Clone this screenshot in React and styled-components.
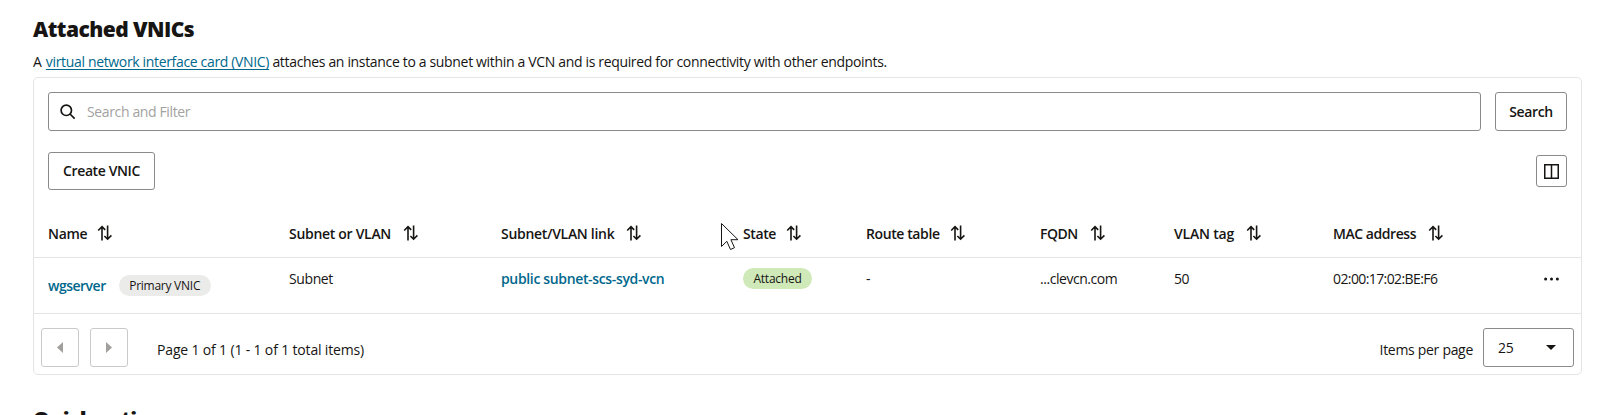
import React from "react";
import styled, { createGlobalStyle, css } from "styled-components";

const Global = createGlobalStyle`
  * { box-sizing: border-box; }
  body {
    margin: 0;
    background: #fff;
    color: #161513;
    font-family: "Open Sans", "Noto Sans", sans-serif;
    font-size: 14px;
    line-height: 20px;
  }
`;

const Page = styled.main`
  width: 1609px;
  height: 415px;
  overflow: hidden;
  padding: 15px 27px 0 33px;
`;

const Heading = styled.h2`
  margin: 0;
  font-size: 21px;
  line-height: 29px;
  font-weight: 800;
  white-space: nowrap;
  letter-spacing: -0.55px;
`;

const Intro = styled.p`
  margin: 8px 0 5px;
  white-space: nowrap;
  letter-spacing: -0.335px;
`;

const InlineLink = styled.a`
  margin-left: 1px;
  color: #00688c;
  text-decoration: underline;
  text-underline-offset: 2px;
  letter-spacing: -0.34px;
`;

const Card = styled.section`
  width: 1549px;
  height: 298px;
  border: 1px solid #e4e4e3;
  border-radius: 5px;
  display: flex;
  flex-direction: column;
`;

const SearchBar = styled.div`
  display: flex;
  gap: 14px;
  padding: 14px 14px 0;
`;

const outline = css`
  border: 1px solid #8b8a89;
  border-radius: 3px;
  background: #fff;
`;

const SearchField = styled.div`
  ${outline}
  flex: 1;
  height: 39px;
  display: flex;
  align-items: center;
  gap: 11px;
  padding-left: 11px;
  color: #a3a2a1;
  letter-spacing: -0.37px;
`;

const Button = styled.button`
  ${outline}
  width: ${(p) => p.$w}px;
  height: ${(p) => p.$h}px;
  padding: 0;
  display: flex;
  align-items: center;
  justify-content: center;
  font: 600 14px/20px "Open Sans", "Noto Sans", sans-serif;
  letter-spacing: -0.4px;
  color: #161513;
  white-space: nowrap;
  ${(p) => p.$disabled && css`border-color: #cbcac9; color: #a09f9e;`}
`;

const Toolbar = styled.div`
  display: flex;
  justify-content: space-between;
  align-items: center;
  padding: 21px 14px 0;
`;

const Row = styled.div`
  display: grid;
  grid-template-columns: 241px 212px 242px 123px 174px 134px 159px 1fr 15px;
  padding: 0 22px 0 14px;
  border-bottom: 1px solid #e4e4e3;
  white-space: nowrap;
`;

const HeaderRow = styled(Row)`
  height: 68px;
  padding-top: 34px;
`;

const BodyRow = styled(Row)`
  height: 56px;
  padding-top: 11px;
`;

const HeadCell = styled.div`
  display: flex;
  align-items: flex-start;
  gap: ${(p) => p.$gap}px;
  height: 20px;
  font-weight: 600;
  letter-spacing: ${(p) => p.$ls}px;
`;

const Cell = styled.div`
  letter-spacing: ${(p) => p.$ls || 0}px;
`;

const NameCell = styled(Cell)`
  display: flex;
  align-items: center;
  height: 21px;
  margin-top: 6px;
  gap: 13px;
`;

const BoldLink = styled.a`
  color: #00688c;
  font-weight: 600;
  letter-spacing: ${(p) => p.$ls}px;
`;

const Badge = styled.span`
  display: flex;
  align-items: center;
  justify-content: center;
  width: ${(p) => p.$w}px;
  height: 21px;
  margin-top: ${(p) => p.$mt || 0}px;
  border-radius: 11px;
  background: ${(p) => p.$bg};
  font-size: 12px;
  line-height: 20px;
  letter-spacing: -0.25px;
`;

const Footer = styled.div`
  display: flex;
  align-items: center;
  padding: 14px 7px 0;
  height: 53px;
`;

const PageButton = styled(Button)`
  margin-right: 11px;
`;

const FooterText = styled.span`
  padding-top: 4px;
  letter-spacing: ${(p) => p.$ls}px;
  white-space: nowrap;
`;

const PageStatus = styled(FooterText)`
  margin-left: 18px;
  margin-right: auto;
`;

const Select = styled.div`
  ${outline}
  margin-left: 10px;
  width: 91px;
  height: 39px;
  display: flex;
  justify-content: space-between;
  align-items: center;
  padding: 0 17px 0 14px;
  letter-spacing: -0.3px;
`;

const Next = styled.div`
  margin-top: 30px;
`;

const Pointer = styled.svg`
  position: absolute;
  left: 720px;
  top: 222px;
`;

const SortIcon = () => (
  <svg width="16" height="18" viewBox="0 0 16 18" fill="none" stroke="#161513" strokeWidth="1.6">
    <path d="M5 16.5V3M1.2 6.5L5 2.7l3.2 3.2M10.6 1.5V15M7.4 12l3.2 3.2 3.8-3.8" />
  </svg>
);

const columns = [
  ["Name", -0.3, 10],
  ["Subnet or VLAN", -0.3, 12],
  ["Subnet/VLAN link", -0.3, 12],
  ["State", -0.4, 10],
  ["Route table", -0.4, 10],
  ["FQDN", -0.5, 12],
  ["VLAN tag", -0.2, 12],
  ["MAC address", -0.45, 12],
];

export default function App() {
  return (
    <Page>
      <Global />
      <Heading>Attached VNICs</Heading>
      <Intro>
        A <InlineLink>virtual network interface card (VNIC)</InlineLink> attaches an instance to a
        subnet within a VCN and is required for connectivity with other endpoints.
      </Intro>
      <Card>
        <SearchBar>
          <SearchField>
            <svg width="16" height="16" viewBox="0 0 16 16" fill="none" stroke="#161513" strokeWidth="1.7">
              <circle cx="6.3" cy="6.3" r="5.2" />
              <path d="M10 10l4.6 4.6" />
            </svg>
            Search and Filter
          </SearchField>
          <Button $w={72} $h={39}>Search</Button>
        </SearchBar>
        <Toolbar>
          <Button $w={107} $h={38}>Create VNIC</Button>
          <Button $w={31} $h={32} aria-label="Columns">
            <svg width="15" height="15" viewBox="0 0 15 15" fill="none" stroke="#161513" strokeWidth="1.5">
              <path d="M.75 .75h13.5v13.5H.75zM7.5 1v13" />
            </svg>
          </Button>
        </Toolbar>
        <HeaderRow>
          {columns.map(([label, ls, gap]) => (
            <HeadCell key={label} $ls={ls} $gap={gap}>
              {label}
              <SortIcon />
            </HeadCell>
          ))}
        </HeaderRow>
        <BodyRow>
          <NameCell>
            <BoldLink $ls={-0.5}>wgserver</BoldLink>
            <Badge $w={92} $bg="#ebebea">Primary VNIC</Badge>
          </NameCell>
          <Cell $ls={-0.4}>Subnet</Cell>
          <Cell><BoldLink $ls={-0.35}>public subnet-scs-syd-vcn</BoldLink></Cell>
          <Cell><Badge $w={69} $bg="#cfe9b9" $mt={-1}>Attached</Badge></Cell>
          <Cell>-</Cell>
          <Cell $ls={-0.45}>...clevcn.com</Cell>
          <Cell $ls={-0.6}>50</Cell>
          <Cell $ls={-0.6}>02:00:17:02:BE:F6</Cell>
          <Cell>
            <svg width="15" height="20" viewBox="0 0 15 20" fill="#161513">
              <circle cx="1.6" cy="10" r="1.5" />
              <circle cx="7.5" cy="10" r="1.5" />
              <circle cx="13.4" cy="10" r="1.5" />
            </svg>
          </Cell>
        </BodyRow>
        <Footer>
          <PageButton $w={38} $h={39} $disabled aria-label="Previous">
            <svg width="6" height="11" viewBox="0 0 6 11" fill="currentColor"><path d="M6 0v11L0 5.5z" /></svg>
          </PageButton>
          <PageButton $w={38} $h={39} $disabled aria-label="Next">
            <svg width="6" height="11" viewBox="0 0 6 11" fill="currentColor"><path d="M0 0v11l6-5.5z" /></svg>
          </PageButton>
          <PageStatus $ls={-0.16}>Page 1 of 1 (1 - 1 of 1 total items)</PageStatus>
          <FooterText $ls={-0.3}>Items per page</FooterText>
          <Select>
            25
            <svg width="10" height="5" viewBox="0 0 10 5" fill="#161513"><path d="M0 0h10L5 5z" /></svg>
          </Select>
        </Footer>
      </Card>
      <Next><Heading>Quick actions</Heading></Next>
      <Pointer width="20" height="30" viewBox="0 0 20 30" fill="#fff" stroke="#161513" strokeWidth="1">
        <path d="M1.5 1.5v23l5.3-5.2 3.7 8.2 4-1.8-3.6-8H18z" />
      </Pointer>
    </Page>
  );
}
